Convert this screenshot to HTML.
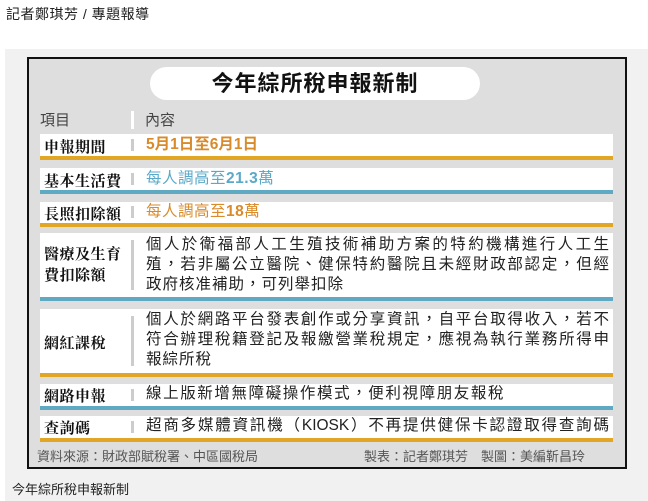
<!DOCTYPE html>
<html><head><meta charset="utf-8"><style>
*{margin:0;padding:0;box-sizing:border-box}
body{width:648px;height:501px;background:#fff;font-family:"Liberation Sans","Noto Sans CJK TC",sans-serif;position:relative;overflow:hidden;color:#222}
.a{position:absolute}
.top{left:6px;top:4px;font-size:14px;color:#222;letter-spacing:0.5px}
.outer{left:5px;top:49px;width:643px;height:452px;background:#f1f1f1}
.frame{left:27px;top:57px;width:600px;height:412px;border:2px solid #111;background:#dedede}
.pill{left:150px;top:67px;width:330px;height:33px;background:#fff;border-radius:17px;text-align:center;font-size:22px;line-height:33px;font-weight:bold;color:#111;letter-spacing:1px}
.hd{top:109px;font-size:15px;color:#444}
.row{left:40px;width:573px;background:#fff}
.line{left:40px;width:573px;height:4px}
.o{background:#e0a624}.b{background:#5fa9c3}
.lab{left:44px;font-family:"Liberation Serif","Noto Serif CJK SC",serif;font-weight:bold;font-size:15px;color:#111;letter-spacing:0.5px}
.div{left:131px;width:3px;background:#ccc}
.ct{left:146px;font-size:15.5px;color:#222;letter-spacing:1px;line-height:20px}
.j{display:block;width:463px;text-align:justify;text-align-last:justify;letter-spacing:0;white-space:nowrap}
.or{color:#d98a2a}.bl{color:#5aa9c8}
.ft{top:446px;font-size:13px;color:#555}
</style></head><body>
<div class="a top">記者鄭琪芳 / 專題報導</div>
<div class="a outer"></div>
<div class="a frame"></div>
<div class="a pill">今年綜所稅申報新制</div>
<div class="a hd" style="left:40px">項目</div>
<div class="a div" style="top:111px;height:18px;background:#fff"></div>
<div class="a hd" style="left:145px">內容</div>

<div class="a row" style="top:134px;height:22px"></div><div class="a line o" style="top:156px"></div>
<div class="a lab" style="top:136px">申報期間</div><div class="a div" style="top:139px;height:12px"></div>
<div class="a ct or" style="top:135px;font-weight:bold;letter-spacing:0">5月1日至6月1日</div>

<div class="a row" style="top:168px;height:22px"></div><div class="a line b" style="top:190px"></div>
<div class="a lab" style="top:170px">基本生活費</div><div class="a div" style="top:173px;height:12px"></div>
<div class="a ct bl" style="top:169px;letter-spacing:0.5px">每人調高至<b>21.3</b>萬</div>

<div class="a row" style="top:202px;height:21px"></div><div class="a line o" style="top:223px"></div>
<div class="a lab" style="top:203px">長照扣除額</div><div class="a div" style="top:206px;height:12px"></div>
<div class="a ct or" style="top:202px;letter-spacing:0.5px">每人調高至<b>18</b>萬</div>

<div class="a row" style="top:233px;height:64px"></div><div class="a line b" style="top:297px"></div>
<div class="a lab" style="top:245px;line-height:21px">醫療及生育<br>費扣除額</div><div class="a div" style="top:240px;height:50px"></div>
<div class="a ct" style="top:235px"><span class="j">個人於衛福部人工生殖技術補助方案的特約機構進行人工生</span><span class="j">殖，若非屬公立醫院、健保特約醫院且未經財政部認定，但經</span>政府核准補助，可列舉扣除</div>

<div class="a row" style="top:309px;height:64px"></div><div class="a line o" style="top:373px"></div>
<div class="a lab" style="top:332px">網紅課稅</div><div class="a div" style="top:316px;height:50px"></div>
<div class="a ct" style="top:310px"><span class="j">個人於網路平台發表創作或分享資訊，自平台取得收入，若不</span><span class="j">符合辦理稅籍登記及報繳營業稅規定，應視為執行業務所得申</span>報綜所稅</div>

<div class="a row" style="top:384px;height:22px"></div><div class="a line b" style="top:406px"></div>
<div class="a lab" style="top:385px">網路申報</div><div class="a div" style="top:389px;height:12px"></div>
<div class="a ct" style="top:384px;letter-spacing:1.6px">線上版新增無障礙操作模式，便利視障朋友報稅</div>

<div class="a row" style="top:416px;height:22px"></div><div class="a line o" style="top:438px"></div>
<div class="a lab" style="top:417px">查詢碼</div><div class="a div" style="top:421px;height:12px"></div>
<div class="a ct" style="top:416px"><span class="j">超商多媒體資訊機（KIOSK）不再提供健保卡認證取得查詢碼</span></div>

<div class="a ft" style="left:37px">資料來源：財政部賦稅署、中區國稅局</div>
<div class="a ft" style="left:364px">製表：記者鄭琪芳　製圖：美編靳昌玲</div>
<div class="a" style="left:12px;top:479px;font-size:13px;color:#222">今年綜所稅申報新制</div>
</body></html>
